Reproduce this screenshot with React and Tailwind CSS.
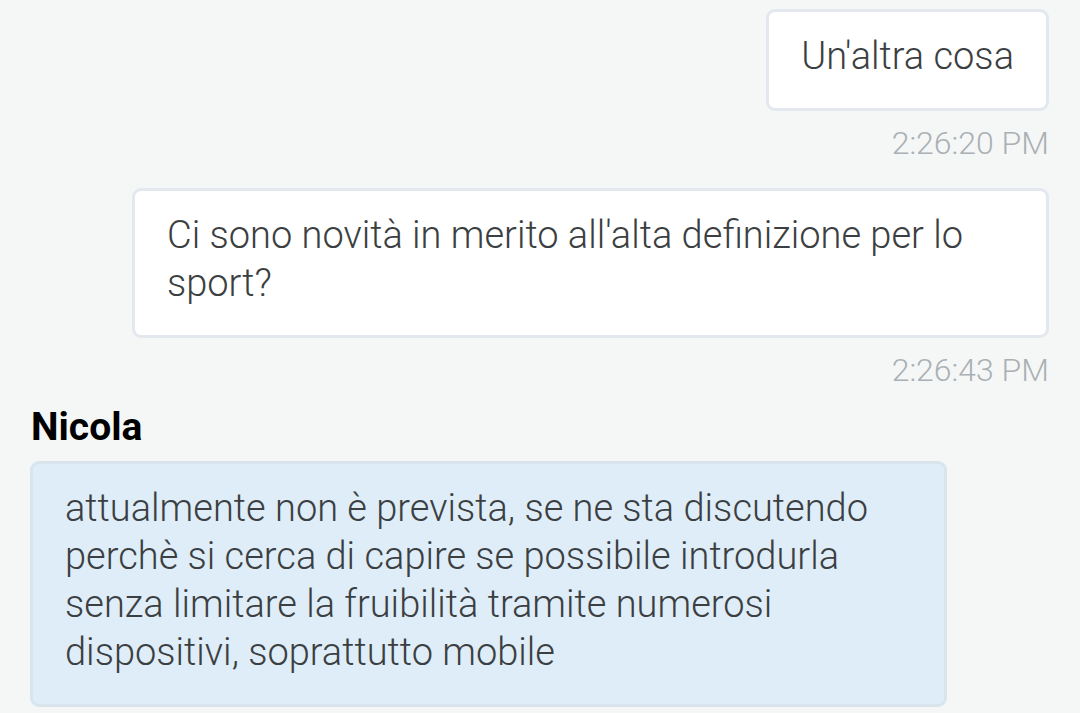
export default function App() {
  return (
    <div className="min-h-[713px] w-full bg-[#f5f7f7] px-[30px] pt-[9px] font-['Roboto_Light','Roboto','Liberation_Sans',sans-serif] overflow-hidden">
      <div className="flex flex-col items-end pr-px">
        <div className="max-w-[90%] rounded-[9px] border-[3px] border-[#e3e8ef] bg-white px-8 pt-5 pb-7 text-[38px] font-light leading-[48px] text-[#3c3f42]">
          Un'altra cosa
        </div>
        <div className="mt-[12px] text-[32px] font-light leading-[40px] text-[#aab0b3]">2:26:20 PM</div>
      </div>
      <div className="mt-[25px] flex flex-col items-end pr-px">
        <div className="w-[917px] rounded-[9px] border-[3px] border-[#e3e8ef] bg-white px-8 pt-5 pb-7 text-[38px] font-light leading-[48px] text-[#3c3f42]">
          Ci sono novità in merito all'alta definizione per lo sport?
        </div>
        <div className="mt-[12px] text-[32px] font-light leading-[40px] text-[#aab0b3]">2:26:43 PM</div>
      </div>
      <div className="mt-[15px] flex flex-col items-start">
        <div className="font-['Roboto','Liberation_Sans',sans-serif] text-[39px] font-bold leading-[44px] text-black pl-px">Nicola</div>
        <div className="mt-[12px] w-[917px] rounded-[9px] border-[3px] border-[#d9e4ec] bg-[#deedf8] px-8 pt-5 pb-7 text-[38px] font-light leading-[48px] text-[#3c3f42]">
          attualmente non è prevista, se ne sta discutendo perchè si cerca di capire se possibile introdurla senza limitare la fruibilità tramite numerosi dispositivi, soprattutto mobile
        </div>
      </div>
    </div>
  );
}
